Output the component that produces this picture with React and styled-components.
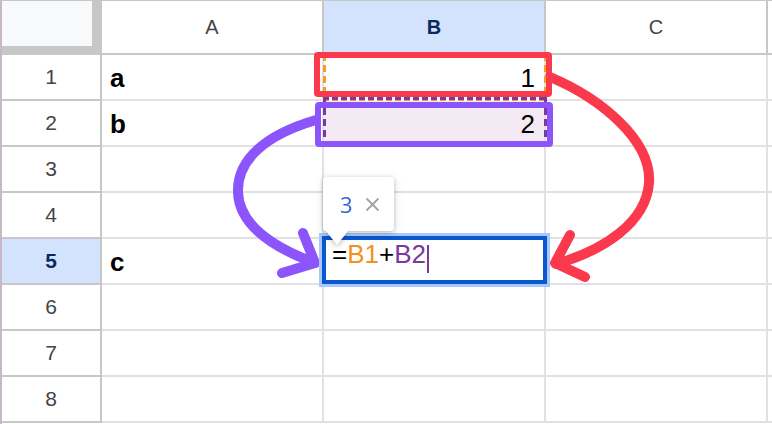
import React from 'react';
import styled, { createGlobalStyle } from 'styled-components';

const GlobalStyle = createGlobalStyle`
  html, body {
    margin: 0;
    padding: 0;
    background: #fff;
  }
  body {
    font-family: "Liberation Sans", Arial, sans-serif;
  }
`;

const Sheet = styled.div`
  position: relative;
  width: 772px;
  height: 424px;
  overflow: hidden;
  box-sizing: border-box;
  border-left: 2px solid #c6b8c7;
  border-top: 1px solid #c7c7c7;
  display: grid;
  grid-template-columns: 100px 222px 222px 222px 1fr;
  grid-template-rows: 54px repeat(8, 46px);
  background: #fff;
`;

const Corner = styled.div`
  background: #c7c7c7;
  display: flex;
  align-items: flex-start;
`;

const CornerFill = styled.div`
  width: 90px;
  height: 45px;
  background: #f8f9fa;
`;

const HeaderCell = styled.div`
  box-sizing: border-box;
  border-right: 2px solid #c7c7c7;
  border-bottom: 2px solid #c7c7c7;
  display: flex;
  align-items: center;
  justify-content: center;
  font-size: ${p => (p.$row ? 21 : 20)}px;
  color: ${p => (p.$active ? '#0b2a5c' : '#444')};
  font-weight: ${p => (p.$active ? 'bold' : 'normal')};
  background: ${p => (p.$active ? '#d3e3fd' : '#fff')};
`;

const Cell = styled.div`
  position: relative;
  box-sizing: border-box;
  border-right: 2px solid #e1e1e1;
  border-bottom: 2px solid #e1e1e1;
  display: flex;
  align-items: flex-end;
  justify-content: ${p => (p.$right ? 'flex-end' : 'flex-start')};
  padding: 0 9px 5px 8px;
  font-size: 26px;
  color: #000;
  font-weight: ${p => (p.$bold ? 'bold' : 'normal')};
  background: ${p => p.$tint || '#fff'};
  line-height: normal;
`;

const dashV = c => `repeating-linear-gradient(to bottom, ${c} 0 7px, transparent 7px 11px)`;
const dashH = c => `repeating-linear-gradient(to right, ${c} 0 6px, #fff 6px 9px)`;

const RangeDash = styled.div`
  position: absolute;
  z-index: 2;
  pointer-events: none;
  left: -1px;
  right: -3px;
  top: ${p => p.$top}px;
  bottom: -2px;
  background:
    ${p => dashV(p.$color)} left top / 3px 100% no-repeat,
    ${p => dashV(p.$color)} right top / 3px 100% no-repeat,
    ${p => dashH(p.$color)} left top / 100% 3px no-repeat,
    ${p => dashH(p.$color)} left bottom / 100% 3px no-repeat;
`;

const RangeFrame = styled.div`
  position: absolute;
  z-index: 3;
  pointer-events: none;
  left: ${p => p.$l}px;
  right: ${p => p.$r}px;
  top: ${p => p.$t}px;
  bottom: ${p => p.$b}px;
  border: 6px solid ${p => p.$color};
  border-radius: 4px;
`;

const Selection = styled.div`
  position: absolute;
  z-index: 3;
  pointer-events: none;
  left: -5px;
  right: -6px;
  top: -6px;
  bottom: -4px;
  border: 3px solid #a8c7fa;

  &::after {
    content: '';
    position: absolute;
    inset: 0;
    border: 4px solid #0b57d0;
  }
`;

const Formula = styled.span`
  margin-bottom: 5px;
  white-space: nowrap;
`;

const Ref = styled.span`
  color: ${p => p.$color};
`;

const Caret = styled.span`
  display: inline-block;
  width: 2px;
  height: 28px;
  margin-left: 1px;
  vertical-align: -10px;
  background: #7b3a9b;
`;

const Tooltip = styled.div`
  position: absolute;
  z-index: 4;
  left: -1px;
  top: -62px;
  width: 71px;
  height: 54px;
  box-sizing: border-box;
  padding-left: 17px;
  display: flex;
  align-items: center;
  gap: 12px;
  background: #fff;
  border-radius: 3px;
  filter: drop-shadow(0 1px 2px rgba(0, 0, 0, 0.22)) drop-shadow(0 2px 5px rgba(0, 0, 0, 0.1));

  &::after {
    content: '';
    position: absolute;
    left: 3px;
    top: 100%;
    border-left: 11px solid transparent;
    border-right: 11px solid transparent;
    border-top: 14px solid #fff;
  }
`;

const Result = styled.span`
  font-family: "Open Sans", "Liberation Sans", sans-serif;
  font-size: 22px;
  color: #2f64d6;
`;

const Overlay = styled.svg`
  position: absolute;
  left: -2px;
  top: -1px;
  z-index: 1;
  pointer-events: none;
`;

const Close = () => (
  <svg width="15" height="15" viewBox="0 0 15 15">
    <path d="M1.5 1.5 13.5 13.5 M13.5 1.5 1.5 13.5" stroke="#a3a3a3" strokeWidth="1.8" fill="none" />
  </svg>
);

const Arrows = () => (
  <Overlay width="772" height="424" viewBox="0 0 772 424">
    <g fill="none" strokeWidth="10" strokeLinecap="round" strokeLinejoin="round">
      <g stroke="#8c55fb">
        <path d="M316 120 C265 135 237 160 238 192 C239 228 280 250 315 263" />
        <path d="M303 233 L315 263 L282 273" />
      </g>
      <g stroke="#fa3a4c">
        <path d="M550 77 C600 98 652 140 649 183 C646 222 605 250 556 264" />
        <path d="M570 235 L555 263 L585 277" />
      </g>
    </g>
  </Overlay>
);

const columns = ['A', 'B', 'C', ''];

const rows = [
  { n: 1, a: 'a', b: '1' },
  { n: 2, a: 'b', b: '2' },
  { n: 3 },
  { n: 4 },
  { n: 5, a: 'c', edit: true },
  { n: 6 },
  { n: 7 },
  { n: 8 },
];

const BCell = ({ row }) => {
  if (row.n === 1) {
    return (
      <Cell $right>
        {row.b}
        <RangeDash $color="#f5a020" $top={-1} />
        <RangeFrame $color="#fa3a4c" $l={-10} $r={-8} $t={-3} $b={2} />
      </Cell>
    );
  }
  if (row.n === 2) {
    return (
      <Cell $right $tint="#f3eaf4">
        {row.b}
        <RangeDash $color="#7b3a9b" $top={-4} />
        <RangeFrame $color="#8c55fb" $l={-9} $r={-9} $t={1} $b={-2} />
      </Cell>
    );
  }
  if (row.edit) {
    return (
      <Cell>
        <Formula>
          =<Ref $color="#f4901c">B1</Ref>+<Ref $color="#7b3a9b">B2</Ref>
          <Caret />
        </Formula>
        <Selection />
        <Tooltip>
          <Result>3</Result>
          <Close />
        </Tooltip>
      </Cell>
    );
  }
  return <Cell />;
};

export default function App() {
  return (
    <>
      <GlobalStyle />
      <Sheet>
        <Arrows />
        <Corner>
          <CornerFill />
        </Corner>
        {columns.map(c => (
          <HeaderCell key={c || 'D'} $active={c === 'B'}>
            {c}
          </HeaderCell>
        ))}
        {rows.map(row => (
          <React.Fragment key={row.n}>
            <HeaderCell $row $active={row.edit}>{row.n}</HeaderCell>
            <Cell $bold>{row.a}</Cell>
            <BCell row={row} />
            <Cell />
            <Cell />
          </React.Fragment>
        ))}
      </Sheet>
    </>
  );
}
